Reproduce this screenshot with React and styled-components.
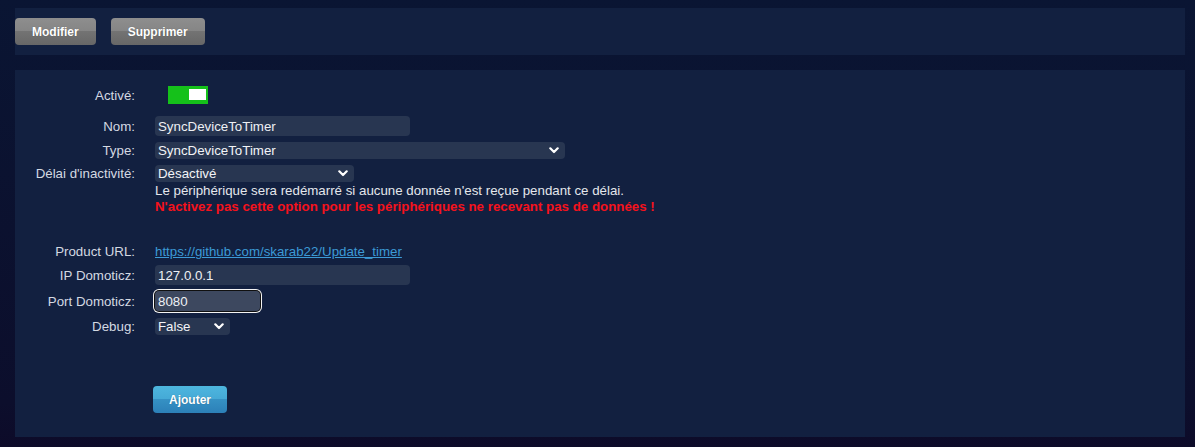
import React from "react";
import styled, { createGlobalStyle } from "styled-components";

const Global = createGlobalStyle`
  html, body { margin: 0; padding: 0; }
  body {
    background: linear-gradient(#0a1533, #0c0e2c 90%, #0d0b29);
    min-height: 447px;
    font-family: "Liberation Sans", Arial, sans-serif;
    font-size: 13.3px;
    color: #dadee6;
  }
`;

const Page = styled.div`
  padding: 8px 10px 10px 15px;
  display: flex;
  flex-direction: column;
  gap: 15px;
`;

const Panel = styled.div`
  background: #122040;
  padding: ${(p) => p.$pad};
`;

const Toolbar = styled(Panel)`
  display: flex;
  gap: 15px;
`;

const GlossButton = styled.button`
  height: 27px;
  padding: 0 ${(p) => p.$px || 16}px;
  border: none;
  border-radius: 4px;
  font-family: "Liberation Sans", Arial, sans-serif;
  font-size: 12px;
  font-weight: bold;
  color: #fff;
  text-shadow: 0 0 1px rgba(0,0,0,0.3);
  cursor: pointer;
  background: ${(p) =>
    p.$blue
      ? "linear-gradient(#4db6de 0%, #45a9d6 50%, #3591c4 50%, #2c80b8 100%)"
      : "linear-gradient(#8e8e8e 0%, #858585 50%, #737373 50%, #676767 100%)"};
`;

const Row = styled.div`
  display: grid;
  grid-template-columns: 120px 1fr;
  column-gap: 20px;
  align-items: ${(p) => (p.$top ? "start" : "center")};
  margin-top: ${(p) => p.$mt || 0}px;
`;

const Label = styled.label`
  text-align: right;
  font-size: 13.3px;
  color: #d4d9e2;
  line-height: 17px;
`;

const Field = styled.div`
  display: flex;
  flex-direction: column;
  align-items: flex-start;
`;

const Toggle = styled.div`
  width: 40px;
  height: 18px;
  background: #15c11a;
  margin-left: 13px;
  position: relative;
  &::after {
    content: "";
    position: absolute;
    right: 2px;
    top: 3px;
    width: 17px;
    height: 11px;
    background: #fff;
  }
`;

const TextInput = styled.input`
  box-sizing: border-box;
  width: ${(p) => p.$w}px;
  height: 20px;
  border: none;
  border-radius: 4px;
  background: ${(p) => (p.$focus ? "#3d485f" : "#283651")};
  color: #eef0f4;
  font-family: "Liberation Sans", Arial, sans-serif;
  font-size: 13.3px;
  padding: 0 3px;
  outline: none;
  box-shadow: ${(p) => (p.$focus ? "0 0 0 1px #101010, 0 0 0 2px #f4f4f4" : "none")};
`;

const SelectWrap = styled.div`
  position: relative;
  width: ${(p) => p.$w}px;
  height: 17px;
`;

const NativeSelect = styled.select`
  appearance: none;
  -webkit-appearance: none;
  box-sizing: border-box;
  width: 100%;
  height: 100%;
  border: none;
  border-radius: 4px;
  background: #283651;
  color: #f2f4f7;
  font-family: "Liberation Sans", Arial, sans-serif;
  font-size: 13.3px;
  padding: 0 0 0 3px;
  outline: none;
`;

const Chevron = styled.svg`
  position: absolute;
  right: 6px;
  top: 5px;
  width: 10px;
  height: 7px;
  pointer-events: none;
`;

const Select = ({ w, children }) => (
  <SelectWrap $w={w}>
    <NativeSelect defaultValue={children}>
      <option>{children}</option>
    </NativeSelect>
    <Chevron viewBox="0 0 10 7">
      <path d="M1.3 1.3 L5 5 L8.7 1.3" fill="none" stroke="#fff" strokeWidth="2.2" strokeLinecap="round" strokeLinejoin="round" />
    </Chevron>
  </SelectWrap>
);

const Help = styled.div`
  font-size: 13.3px;
  line-height: 15px;
  color: ${(p) => (p.$warn ? "#f5121c" : "#e4e7ec")};
  font-weight: ${(p) => (p.$warn ? "bold" : "normal")};
  margin-top: ${(p) => p.$mt || 0}px;
`;

const Link = styled.a`
  color: #3c9ad6;
  text-decoration: underline;
  font-size: 13.3px;
`;

const ButtonRow = styled.div`
  margin: 51px 0 0 138px;
`;

export default function App() {
  return (
    <>
      <Global />
      <Page>
        <Toolbar $pad="10px 0">
          <GlossButton $px={17}>Modifier</GlossButton>
          <GlossButton $px={17}>Supprimer</GlossButton>
        </Toolbar>
        <Panel $pad="16px 0 24px 0">
          <Row>
            <Label>Activé:</Label>
            <Field><Toggle /></Field>
          </Row>
          <Row $mt={12}>
            <Label>Nom:</Label>
            <Field><TextInput $w={255} defaultValue="SyncDeviceToTimer" /></Field>
          </Row>
          <Row $mt={6}>
            <Label>Type:</Label>
            <Field><Select w={410}>SyncDeviceToTimer</Select></Field>
          </Row>
          <Row $mt={6} $top>
            <Label>Délai d'inactivité:</Label>
            <Field>
              <Select w={199}>Désactivé</Select>
              <Help $mt={1}>Le périphérique sera redémarré si aucune donnée n'est reçue pendant ce délai.</Help>
              <Help $warn $mt={1}>N'activez pas cette option pour les périphériques ne recevant pas de données !</Help>
            </Field>
          </Row>
          <Row $mt={29}>
            <Label>Product URL:</Label>
            <Field><Link href="#">https://github.com/skarab22/Update_timer</Link></Field>
          </Row>
          <Row $mt={5}>
            <Label>IP Domoticz:</Label>
            <Field><TextInput $w={255} defaultValue="127.0.0.1" /></Field>
          </Row>
          <Row $mt={6}>
            <Label>Port Domoticz:</Label>
            <Field><TextInput $w={105} $focus defaultValue="8080" /></Field>
          </Row>
          <Row $mt={7}>
            <Label>Debug:</Label>
            <Field><Select w={75}>False</Select></Field>
          </Row>
          <ButtonRow>
            <GlossButton $blue $px={16}>Ajouter</GlossButton>
          </ButtonRow>
        </Panel>
      </Page>
    </>
  );
}
